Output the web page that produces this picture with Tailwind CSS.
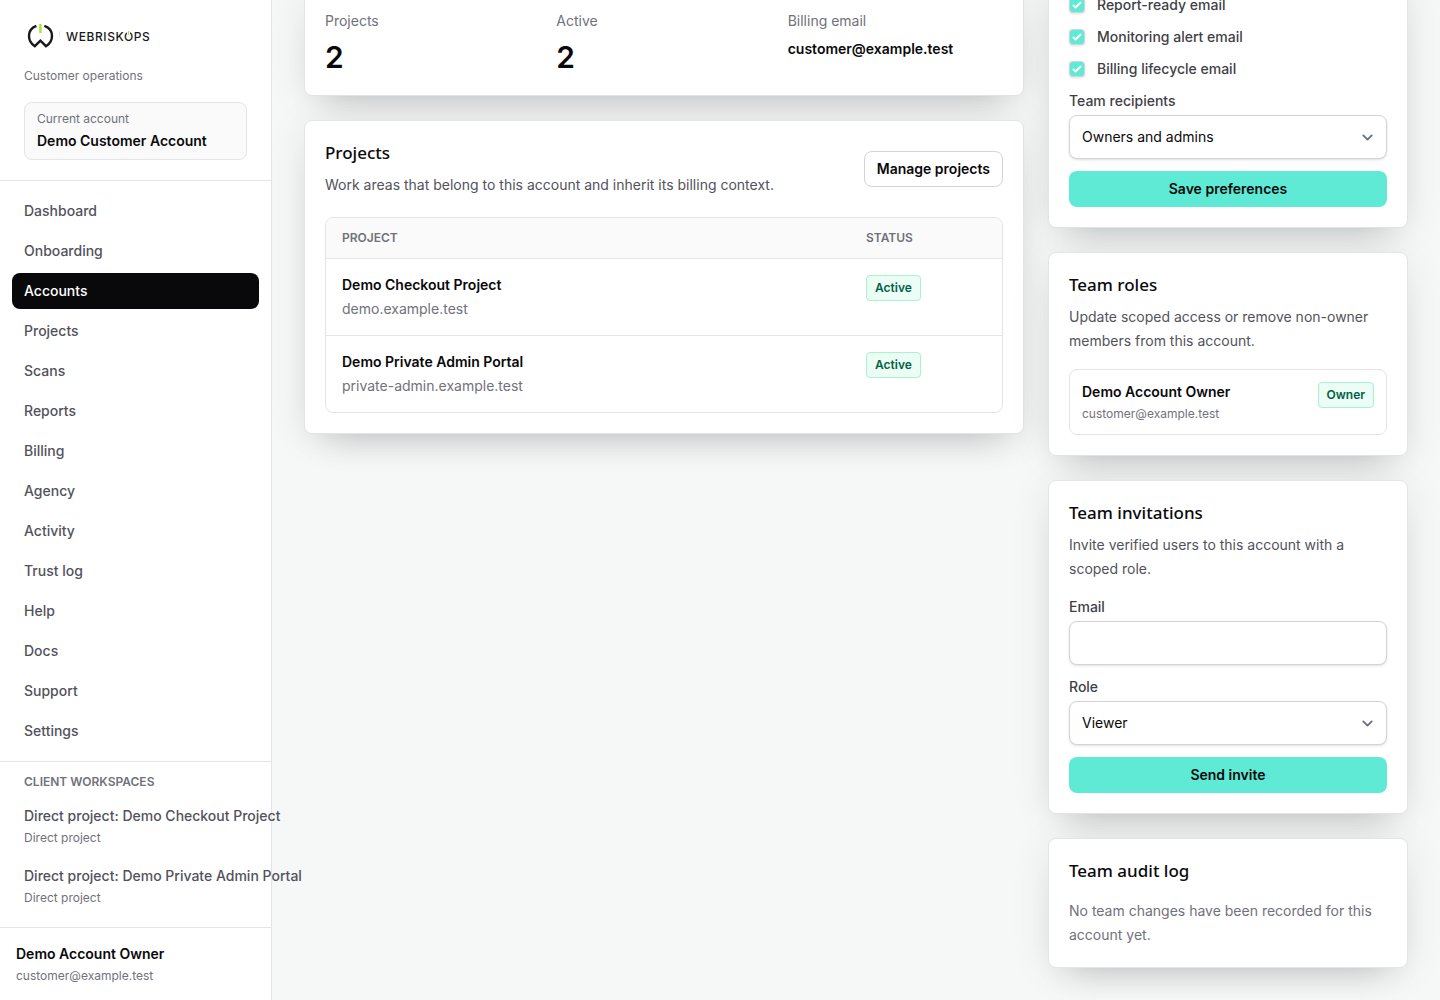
<!DOCTYPE html>
<html lang="en">
<head>
    <meta charset="UTF-8">
    <meta name="viewport" content="width=device-width, initial-scale=1.0">
    <title>Accounts - WebRiskOps</title>
    <script src="https://cdn.jsdelivr.net/npm/@tailwindcss/browser@4"></script>
</head>
<body class="bg-[#f5f8f7] font-['Inter',sans-serif] text-sm text-zinc-950 antialiased">
<div class="flex h-screen overflow-hidden">

    <!-- Sidebar -->
    <aside class="relative z-10 flex w-68 shrink-0 flex-col border-r border-zinc-200 bg-white">
        <div class="border-b border-zinc-200 px-6 py-5">
            <a href="#" aria-label="WebRiskOps" class="block">
                <svg class="h-8 w-34" viewBox="0 0 136 32" fill="none">
                    <path d="M12.4 5.8C8 7.4 5 11.200 5 15.800C5 20.400 7.600 24.200 10.800 26.200L16.400 20.600L22 26.200C25.400 24.200 28 20.400 28 15.800C28 11.200 25 7.400 20.400 5.800" stroke="#18181b" stroke-width="2.4"/>
                    <path d="M16.400 4V13" stroke="#a3e635" stroke-width="2.4"/>
                    <path d="M35.500 11V17" stroke="#e4e4e7"/>
                    <text x="42" y="20.500" class="text-xs font-medium tracking-wider" fill="#18181b">WEBRISKOPS</text>
                    <path d="M104.500 10V14" stroke="#fff" stroke-width="3"/>
                    <path d="M104.500 11V15" stroke="#a3e635" stroke-width="1.2"/>
                </svg>
            </a>
            <p class="mt-3.5 text-xs leading-5 text-zinc-500">Customer operations</p>
            <div class="mt-4 rounded-lg border border-zinc-200 bg-zinc-50 px-3 py-2">
                <p class="text-xs text-zinc-500">Current account</p>
                <p class="mt-1 font-semibold">Demo Customer Account</p>
            </div>
        </div>

        <nav class="flex flex-col gap-1 p-3 font-medium text-zinc-600">
            <a href="#" class="rounded-lg px-3 py-2">Dashboard</a>
            <a href="#" class="rounded-lg px-3 py-2">Onboarding</a>
            <a href="#" class="rounded-lg bg-zinc-950 px-3 py-2 text-white" aria-current="page">Accounts</a>
            <a href="#" class="rounded-lg px-3 py-2">Projects</a>
            <a href="#" class="rounded-lg px-3 py-2">Scans</a>
            <a href="#" class="rounded-lg px-3 py-2">Reports</a>
            <a href="#" class="rounded-lg px-3 py-2">Billing</a>
            <a href="#" class="rounded-lg px-3 py-2">Agency</a>
            <a href="#" class="rounded-lg px-3 py-2">Activity</a>
            <a href="#" class="rounded-lg px-3 py-2">Trust log</a>
            <a href="#" class="rounded-lg px-3 py-2">Help</a>
            <a href="#" class="rounded-lg px-3 py-2">Docs</a>
            <a href="#" class="rounded-lg px-3 py-2">Support</a>
            <a href="#" class="rounded-lg px-3 py-2">Settings</a>
        </nav>

        <div class="border-t border-zinc-200 p-3">
            <p class="px-3 text-xs font-semibold uppercase text-zinc-500">Client workspaces</p>
            <div class="mt-2 flex flex-col gap-1">
                <a href="#" class="rounded-lg px-3 py-2">
                    <span class="block whitespace-nowrap font-medium text-zinc-600">Direct project: Demo Checkout Project</span>
                    <span class="mt-1 block text-xs text-zinc-500">Direct project</span>
                </a>
                <a href="#" class="rounded-lg px-3 py-2">
                    <span class="block whitespace-nowrap font-medium text-zinc-600">Direct project: Demo Private Admin Portal</span>
                    <span class="mt-1 block text-xs text-zinc-500">Direct project</span>
                </a>
            </div>
        </div>

        <div class="mt-auto border-t border-zinc-200 p-4">
            <p class="font-semibold">Demo Account Owner</p>
            <p class="mt-1 text-xs text-zinc-500">customer@example.test</p>
        </div>
    </aside>

    <!-- Account detail -->
    <main class="min-w-0 flex-1 overflow-hidden px-8">
        <div class="-mt-[26px] grid grid-cols-[minmax(0,1fr)_360px] items-start gap-6">

            <div class="mt-4 flex flex-col gap-6">
                <section class="rounded-lg border border-zinc-200 bg-white p-5 shadow-[0_20px_36px_-22px_rgba(9,9,11,0.24),0_4px_40px_rgba(9,9,11,0.08)]">
                    <dl class="grid grid-cols-3 gap-4">
                        <div>
                            <dt class="text-zinc-500">Projects</dt>
                            <dd class="mt-2 text-3xl font-semibold">2</dd>
                        </div>
                        <div>
                            <dt class="text-zinc-500">Active</dt>
                            <dd class="mt-2 text-3xl font-semibold">2</dd>
                        </div>
                        <div>
                            <dt class="text-zinc-500">Billing email</dt>
                            <dd class="mt-2 font-semibold">customer@example.test</dd>
                        </div>
                    </dl>
                </section>

                <section class="rounded-lg border border-zinc-200 bg-white p-5 shadow-[0_20px_36px_-22px_rgba(9,9,11,0.24),0_4px_40px_rgba(9,9,11,0.08)]">
                    <div class="flex items-center justify-between gap-4">
                        <div>
                            <h2 class="font-['Noto_Sans',sans-serif] text-[17px] leading-6 font-medium">Projects</h2>
                            <p class="mt-2 leading-6 text-zinc-600">Work areas that belong to this account and inherit its billing context.</p>
                        </div>
                        <button type="button" class="h-9 rounded-lg border border-zinc-300 bg-white px-3 font-semibold">Manage projects</button>
                    </div>
                    <div class="mt-5 overflow-hidden rounded-lg border border-zinc-200">
                        <table class="w-full text-left">
                            <thead class="bg-zinc-50 text-xs uppercase text-zinc-500">
                                <tr class="border-b border-zinc-200">
                                    <th class="px-4 py-3 font-semibold">Project</th>
                                    <th class="w-38 px-4 py-3 font-semibold">Status</th>
                                </tr>
                            </thead>
                            <tbody class="divide-y divide-zinc-200">
                                <tr>
                                    <td class="p-4 align-top">
                                        <p class="font-semibold">Demo Checkout Project</p>
                                        <p class="mt-1 text-zinc-500">demo.example.test</p>
                                    </td>
                                    <td class="p-4 align-top">
                                        <span class="inline-flex rounded border border-emerald-200 bg-emerald-50 px-2 py-1 text-xs font-semibold text-emerald-800">Active</span>
                                    </td>
                                </tr>
                                <tr>
                                    <td class="p-4 align-top">
                                        <p class="font-semibold">Demo Private Admin Portal</p>
                                        <p class="mt-1 text-zinc-500">private-admin.example.test</p>
                                    </td>
                                    <td class="p-4 align-top">
                                        <span class="inline-flex rounded border border-emerald-200 bg-emerald-50 px-2 py-1 text-xs font-semibold text-emerald-800">Active</span>
                                    </td>
                                </tr>
                            </tbody>
                        </table>
                    </div>
                </section>
            </div>

            <div class="flex flex-col gap-6">
                <section class="rounded-lg border border-zinc-200 bg-white p-5 shadow-[0_20px_36px_-22px_rgba(9,9,11,0.24),0_4px_40px_rgba(9,9,11,0.08)]">
                    <form class="flex flex-col gap-3">
                        <label class="flex items-center gap-3 font-medium text-zinc-700">
                            <span class="relative flex size-4">
                                <input type="checkbox" checked class="size-4 appearance-none rounded border border-zinc-300 shadow-sm checked:bg-[#5eead4]">
                                <svg class="pointer-events-none absolute inset-0 size-4" viewBox="0 0 16 16" fill="#fff"><path d="M12.207 4.793a1 1 0 010 1.414l-5 5a1 1 0 01-1.414 0l-2-2a1 1 0 011.414-1.414L6.500 9.086l4.293-4.293a1 1 0 011.414 0z"/></svg>
                            </span>
                            Report-ready email
                        </label>
                        <label class="flex items-center gap-3 font-medium text-zinc-700">
                            <span class="relative flex size-4">
                                <input type="checkbox" checked class="size-4 appearance-none rounded border border-zinc-300 shadow-sm checked:bg-[#5eead4]">
                                <svg class="pointer-events-none absolute inset-0 size-4" viewBox="0 0 16 16" fill="#fff"><path d="M12.207 4.793a1 1 0 010 1.414l-5 5a1 1 0 01-1.414 0l-2-2a1 1 0 011.414-1.414L6.500 9.086l4.293-4.293a1 1 0 011.414 0z"/></svg>
                            </span>
                            Monitoring alert email
                        </label>
                        <label class="flex items-center gap-3 font-medium text-zinc-700">
                            <span class="relative flex size-4">
                                <input type="checkbox" checked class="size-4 appearance-none rounded border border-zinc-300 shadow-sm checked:bg-[#5eead4]">
                                <svg class="pointer-events-none absolute inset-0 size-4" viewBox="0 0 16 16" fill="#fff"><path d="M12.207 4.793a1 1 0 010 1.414l-5 5a1 1 0 01-1.414 0l-2-2a1 1 0 011.414-1.414L6.500 9.086l4.293-4.293a1 1 0 011.414 0z"/></svg>
                            </span>
                            Billing lifecycle email
                        </label>
                        <div>
                            <label for="recipients" class="block font-medium text-zinc-700">Team recipients</label>
                            <div class="relative mt-1">
                                <select id="recipients" class="h-11 w-full appearance-none rounded-lg border border-zinc-300 bg-white px-3 shadow-sm">
                                    <option>Owners and admins</option>
                                </select>
                                <svg class="pointer-events-none absolute top-3 right-[9px] size-[21px]" viewBox="0 0 20 20" fill="none" stroke="#6b7280" stroke-width="1.8" stroke-linecap="round" stroke-linejoin="round"><path d="M6 8l4 4 4-4"/></svg>
                            </div>
                        </div>
                        <button type="button" class="h-9 rounded-lg bg-[#5eead4] font-semibold">Save preferences</button>
                    </form>
                </section>

                <section class="rounded-lg border border-zinc-200 bg-white p-5 shadow-[0_20px_36px_-22px_rgba(9,9,11,0.24),0_4px_40px_rgba(9,9,11,0.08)]">
                    <h2 class="font-['Noto_Sans',sans-serif] text-[17px] leading-6 font-medium">Team roles</h2>
                    <p class="mt-2 leading-6 text-zinc-600">Update scoped access or remove non-owner members from this account.</p>
                    <div class="mt-4 flex items-start justify-between gap-3 rounded-lg border border-zinc-200 p-3">
                        <div>
                            <p class="font-semibold">Demo Account Owner</p>
                            <p class="mt-1 text-xs text-zinc-500">customer@example.test</p>
                        </div>
                        <span class="inline-flex rounded border border-emerald-200 bg-emerald-50 px-2 py-1 text-xs font-semibold text-emerald-800">Owner</span>
                    </div>
                </section>

                <section class="rounded-lg border border-zinc-200 bg-white p-5 shadow-[0_20px_36px_-22px_rgba(9,9,11,0.24),0_4px_40px_rgba(9,9,11,0.08)]">
                    <h2 class="font-['Noto_Sans',sans-serif] text-[17px] leading-6 font-medium">Team invitations</h2>
                    <p class="mt-2 leading-6 text-zinc-600">Invite verified users to this account with a scoped role.</p>
                    <form class="mt-4 flex flex-col gap-3">
                        <div>
                            <label for="invite-email" class="block font-medium text-zinc-700">Email</label>
                            <input id="invite-email" type="email" class="mt-1 block h-11 w-full rounded-lg border border-zinc-300 bg-white px-3 shadow-sm">
                        </div>
                        <div>
                            <label for="invite-role" class="block font-medium text-zinc-700">Role</label>
                            <div class="relative mt-1">
                                <select id="invite-role" class="h-11 w-full appearance-none rounded-lg border border-zinc-300 bg-white px-3 shadow-sm">
                                    <option>Viewer</option>
                                </select>
                                <svg class="pointer-events-none absolute top-3 right-[9px] size-[21px]" viewBox="0 0 20 20" fill="none" stroke="#6b7280" stroke-width="1.8" stroke-linecap="round" stroke-linejoin="round"><path d="M6 8l4 4 4-4"/></svg>
                            </div>
                        </div>
                        <button type="button" class="h-9 rounded-lg bg-[#5eead4] font-semibold">Send invite</button>
                    </form>
                </section>

                <section class="rounded-lg border border-zinc-200 bg-white p-5 shadow-[0_20px_36px_-22px_rgba(9,9,11,0.24),0_4px_40px_rgba(9,9,11,0.08)]">
                    <h2 class="font-['Noto_Sans',sans-serif] text-[17px] leading-6 font-medium">Team audit log</h2>
                    <p class="mt-4 leading-6 text-zinc-500">No team changes have been recorded for this account yet.</p>
                </section>
            </div>
        </div>
    </main>
</div>
</body>
</html>
